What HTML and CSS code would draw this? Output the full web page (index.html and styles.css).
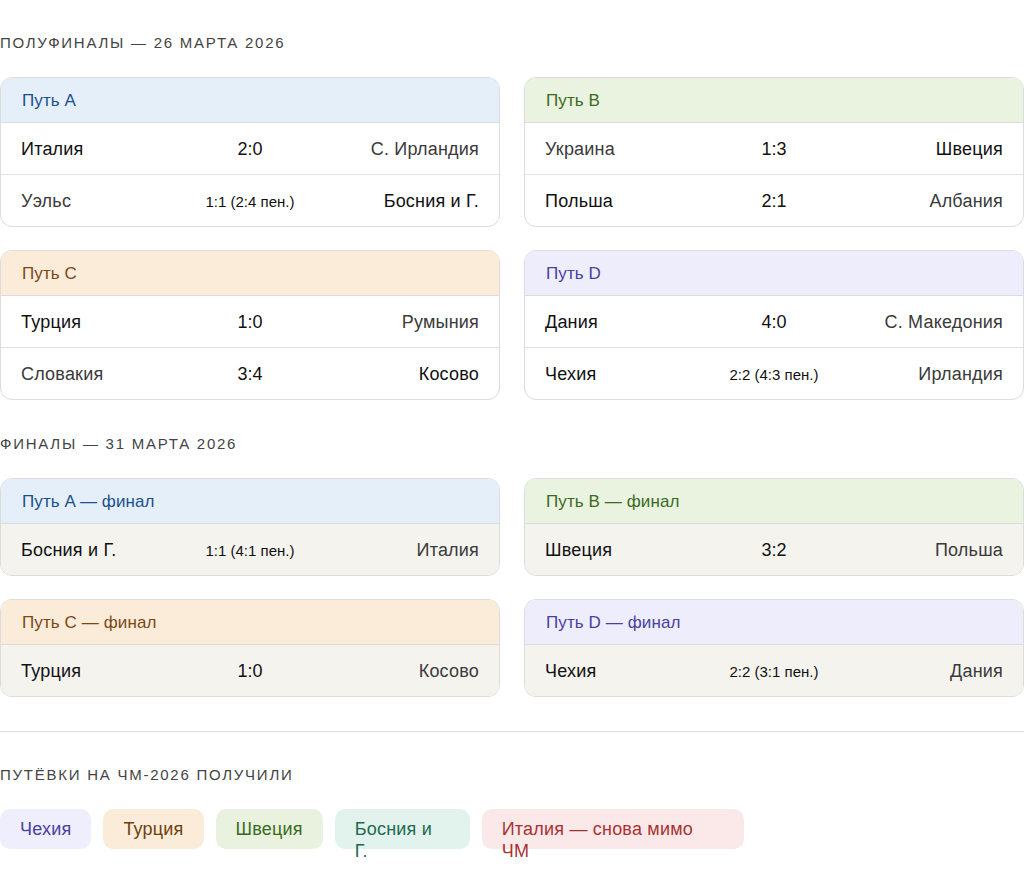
FILE: index.html
```html
<!DOCTYPE html>
<html lang="ru">
<head>
<meta charset="utf-8">
<title>Плей-офф отбора ЧМ-2026</title>
<link rel="stylesheet" href="styles.css">
</head>
<body>
<main class="page">
  <h2 class="section-title">Полуфиналы — 26 марта 2026</h2>
  <div class="grid grid-semis">
    <section class="card path-a">
      <header class="card-head">Путь A</header>
      <div class="match"><span class="team win">Италия</span><span class="score">2:0</span><span class="team right">С. Ирландия</span></div>
      <div class="match"><span class="team">Уэльс</span><span class="score pen">1:1 (2:4 пен.)</span><span class="team right win">Босния и Г.</span></div>
    </section>
    <section class="card path-b">
      <header class="card-head">Путь B</header>
      <div class="match"><span class="team">Украина</span><span class="score">1:3</span><span class="team right win">Швеция</span></div>
      <div class="match"><span class="team win">Польша</span><span class="score">2:1</span><span class="team right">Албания</span></div>
    </section>
    <section class="card path-c">
      <header class="card-head">Путь C</header>
      <div class="match"><span class="team win">Турция</span><span class="score">1:0</span><span class="team right">Румыния</span></div>
      <div class="match"><span class="team">Словакия</span><span class="score">3:4</span><span class="team right win">Косово</span></div>
    </section>
    <section class="card path-d">
      <header class="card-head">Путь D</header>
      <div class="match"><span class="team win">Дания</span><span class="score">4:0</span><span class="team right">С. Македония</span></div>
      <div class="match"><span class="team win">Чехия</span><span class="score pen">2:2 (4:3 пен.)</span><span class="team right">Ирландия</span></div>
    </section>
  </div>

  <h2 class="section-title">Финалы — 31 марта 2026</h2>
  <div class="grid grid-finals">
    <section class="card path-a final">
      <header class="card-head">Путь A — финал</header>
      <div class="match"><span class="team win">Босния и Г.</span><span class="score pen">1:1 (4:1 пен.)</span><span class="team right">Италия</span></div>
    </section>
    <section class="card path-b final">
      <header class="card-head">Путь B — финал</header>
      <div class="match"><span class="team win">Швеция</span><span class="score">3:2</span><span class="team right">Польша</span></div>
    </section>
    <section class="card path-c final">
      <header class="card-head">Путь C — финал</header>
      <div class="match"><span class="team win">Турция</span><span class="score">1:0</span><span class="team right">Косово</span></div>
    </section>
    <section class="card path-d final">
      <header class="card-head">Путь D — финал</header>
      <div class="match"><span class="team win">Чехия</span><span class="score pen">2:2 (3:1 пен.)</span><span class="team right">Дания</span></div>
    </section>
  </div>

  <hr class="divider">

  <h2 class="section-title">Путёвки на ЧМ-2026 получили</h2>
  <div class="pills">
    <span class="pill pill-d">Чехия</span>
    <span class="pill pill-c">Турция</span>
    <span class="pill pill-b">Швеция</span>
    <span class="pill pill-bih">Босния и Г.</span>
    <span class="pill pill-ita">Италия — снова мимо ЧМ</span>
  </div>
</main>
</body>
</html>
```

FILE: styles.css
```css
* { box-sizing: border-box; }

html, body {
  margin: 0;
  padding: 0;
  background: #ffffff;
}

body {
  font-family: "Liberation Sans", Arial, Helvetica, sans-serif;
  color: #1a1a1a;
}

.page {
  width: 1024px;
  padding-top: 33px;
  padding-bottom: 34px;
}

.section-title {
  margin: 0 0 24px;
  font-size: 15px;
  line-height: 20px;
  font-weight: normal;
  letter-spacing: 1.75px;
  text-transform: uppercase;
  color: #444444;
}

.grid {
  display: grid;
  grid-template-columns: 500px 500px;
  column-gap: 24px;
  row-gap: 23px;
}

.grid-semis { margin-bottom: 34px; }
.grid-finals { margin-bottom: 34px; }

.card {
  border: 1px solid #dcdcdc;
  border-radius: 12px;
  overflow: hidden;
  background: #ffffff;
}

.card-head {
  height: 45px;
  padding: 1px 21px 0;
  display: flex;
  align-items: center;
  font-size: 17px;
  letter-spacing: 0.1px;
  border-bottom: 1px solid #dcdcdc;
}

.path-a .card-head { background: #e4eff9; color: #1c4f8c; }
.path-b .card-head { background: #e9f3e0; color: #3b6a1e; }
.path-c .card-head { background: #faecd9; color: #7a4814; }
.path-d .card-head { background: #eeedfb; color: #493fa0; }

.match {
  height: 51px;
  padding: 2px 20px 0;
  display: grid;
  grid-template-columns: 1fr auto 1fr;
  align-items: center;
  font-size: 18px;
  letter-spacing: 0.2px;
}

.match + .match {
  border-top: 1px solid #e2e2e2;
  height: 52px;
}

.final .match { background: #f4f3ee; }

.team { color: #3a3a3a; }
.team.win { color: #111111; }
.team.right { text-align: right; }

.score {
  text-align: center;
  font-size: 18px;
  letter-spacing: 0;
  color: #111111;
}

.score.pen {
  font-size: 15px;
}

.divider {
  margin: 0 0 33px;
  border: 0;
  border-top: 1px solid #dddddd;
  height: 0;
}

.pills {
  display: flex;
  gap: 12px;
  align-items: flex-start;
}

.pill {
  height: 40px;
  padding: 9px 20px;
  border-radius: 10px;
  font-size: 18px;
  letter-spacing: 0.2px;
  line-height: 22px;
}

.pill-d { background: #efeefc; color: #4a3fa0; }
.pill-c { background: #fbecd9; color: #6e4010; }
.pill-b { background: #e8f2de; color: #3b6a1e; }
.pill-bih { background: #e1f3ec; color: #1f6a50; width: 135px; }
.pill-ita { background: #fbe9e9; color: #a83232; width: 262px; }
```
